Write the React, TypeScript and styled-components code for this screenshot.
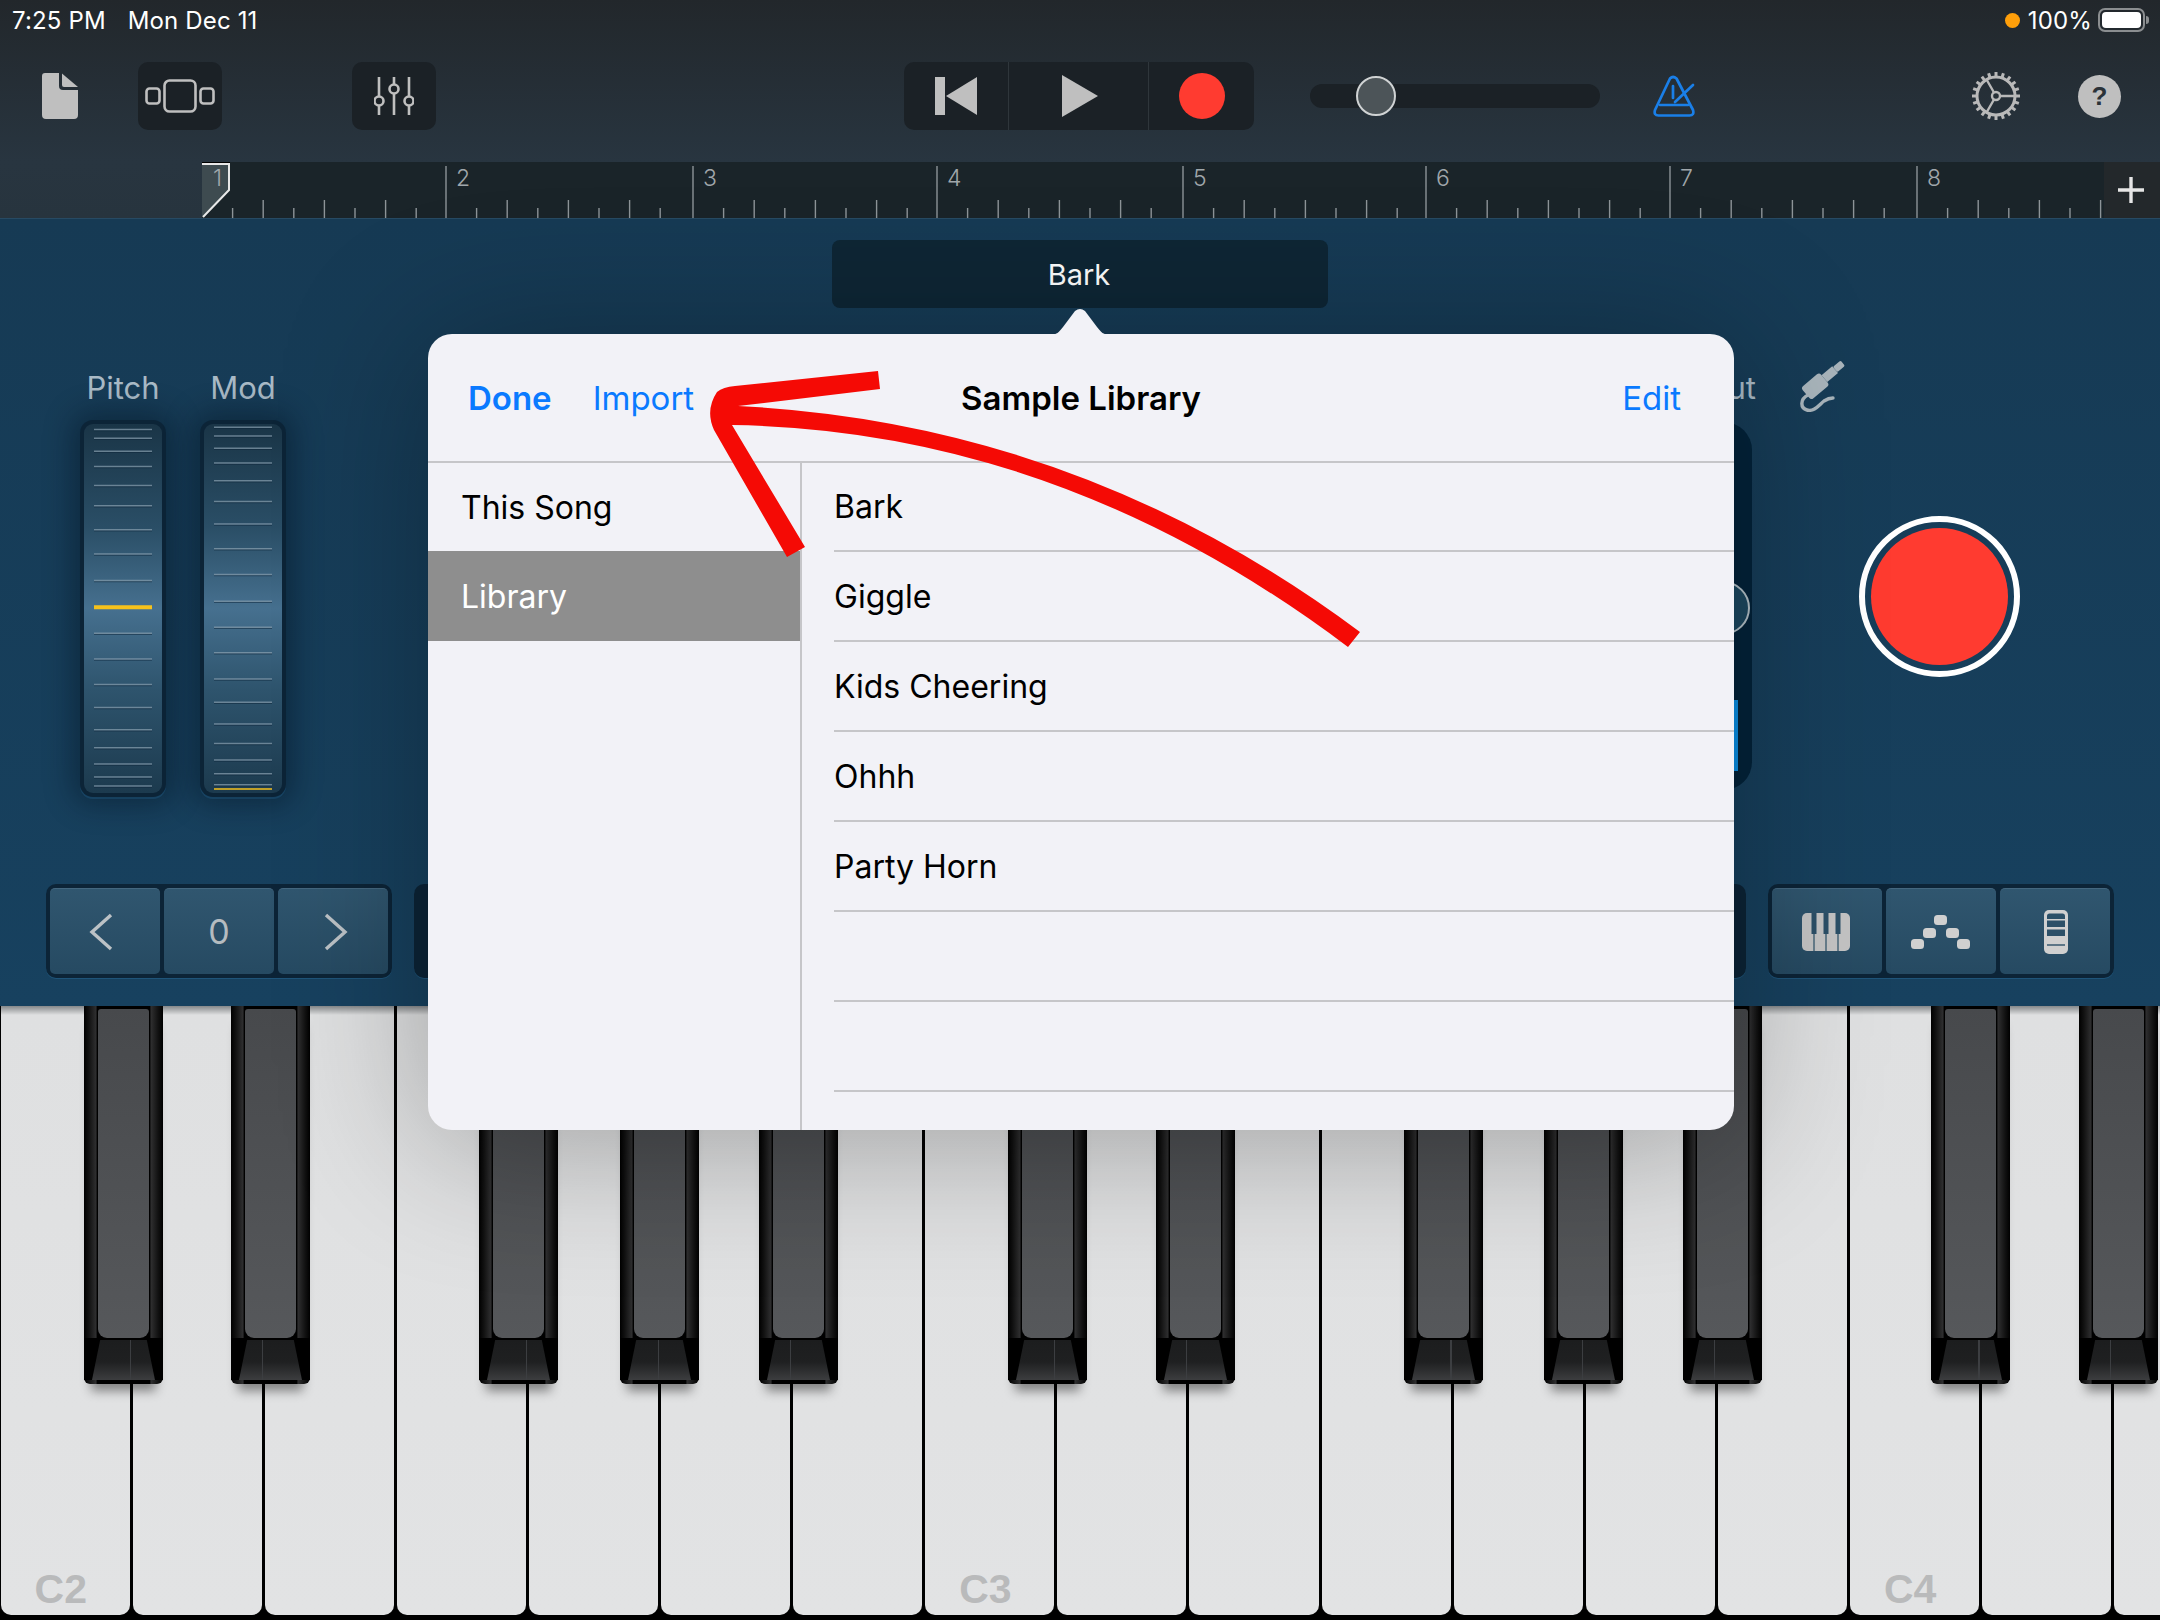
import React from "react";
import styled, { createGlobalStyle } from "styled-components";

const Global = createGlobalStyle`
  html, body { margin: 0; padding: 0; background: #000; }
  * { box-sizing: border-box; }
  body { font-family: Inter, "Noto Sans", sans-serif; }
`;

const Page = styled.div`
  position: relative;
  width: 2160px;
  height: 1620px;
  overflow: hidden;
  display: flex;
  flex-direction: column;
`;

const Top = styled.header`
  height: 162px;
  flex: none;
  background: linear-gradient(180deg, #22272b 0%, #283540 100%);
  color: #fff;
`;

const StatusBar = styled.div`
  height: 40px;
  padding: 0 15px 0 12px;
  display: flex;
  align-items: center;
  font-size: 24px;
  letter-spacing: 0.15px;
  font-weight: 400;
`;

const StatusTime = styled.span`
  margin-right: 22px;
`;

const StatusRight = styled.div`
  margin-left: auto;
  display: flex;
  align-items: center;
`;

const OrangeDot = styled.span`
  width: 15px;
  height: 15px;
  border-radius: 50%;
  background: #ff9f0a;
  margin-right: 8px;
`;

const Battery = styled.span`
  position: relative;
  width: 47px;
  height: 24px;
  margin-left: 6px;
  border: 2px solid #8b8e90;
  border-radius: 7px;
  padding: 2px;
  display: flex;
  &::before {
    content: "";
    flex: 1;
    background: #fff;
    border-radius: 4px;
  }
  &::after {
    content: "";
    position: absolute;
    right: -6px;
    top: 6px;
    width: 3px;
    height: 8px;
    border-radius: 0 3px 3px 0;
    background: #8b8e90;
  }
`;

const Toolbar = styled.div`
  height: 68px;
  margin-top: 22px;
  display: flex;
  align-items: center;
`;

const Slot = styled.div<{ $at: number; $w: number }>`
  flex: none;
  width: ${(p) => p.$w}px;
  margin-left: ${(p) => p.$at}px;
  display: flex;
  align-items: center;
  justify-content: center;
`;

const ToolButton = styled.div<{ $at: number }>`
  flex: none;
  width: 84px;
  height: 68px;
  margin-left: ${(p) => p.$at}px;
  border-radius: 10px;
  background: #1b2126;
  display: flex;
  align-items: center;
  justify-content: center;
`;

const Transport = styled.div`
  flex: none;
  width: 350px;
  height: 68px;
  margin-left: 468px;
  border-radius: 10px;
  background: #1b2126;
  display: flex;
`;

const TransportCell = styled.div<{ $w: number; $pad?: number }>`
  width: ${(p) => p.$w}px;
  border-right: 1px solid #2f363b;
  padding-left: ${(p) => p.$pad ?? 0}px;
  display: flex;
  align-items: center;
  justify-content: center;
  &:last-child {
    border-right: 0;
  }
`;

const RecordDot = styled.div`
  width: 46px;
  height: 46px;
  border-radius: 50%;
  background: #ff3b30;
`;

const VolumeTrack = styled.div`
  flex: none;
  width: 290px;
  height: 24px;
  margin-left: 56px;
  border-radius: 12px;
  background: #1b2126;
  display: flex;
  align-items: center;
  padding-left: 46px;
`;

const VolumeThumb = styled.div`
  width: 40px;
  height: 40px;
  border-radius: 50%;
  background: #4c5458;
  border: 2px solid #d0d3d4;
`;

const HelpButton = styled.div`
  flex: none;
  width: 43px;
  height: 43px;
  margin-left: 57px;
  border-radius: 50%;
  background: #bfbfbf;
  color: #2a3238;
  font-family: "Liberation Sans", sans-serif;
  font-weight: 700;
  font-size: 26px;
  display: flex;
  align-items: center;
  justify-content: center;
`;

const RulerRow = styled.div`
  height: 57px;
  flex: none;
  display: flex;
  background: linear-gradient(180deg, #283540 0%, #27343e 100%);
  border-bottom: 1px solid #274a63;
`;

const RulerGutter = styled.div`
  width: 202px;
  flex: none;
`;

const RulerTrack = styled.svg`
  width: 1902px;
  height: 56px;
  flex: none;
  display: block;
  background: #1a2429;
`;

const RulerNumber = styled.text`
  font-family: Inter, sans-serif;
  font-size: 23px;
  font-weight: 300;
  fill: #a0a7ab;
`;

const AddBar = styled.div`
  width: 56px;
  flex: none;
  background: #23282b;
  display: flex;
  align-items: center;
  justify-content: center;
  padding: 0 2px 0 0;
`;

const Panel = styled.section`
  height: 787px;
  flex: none;
  display: flex;
  flex-direction: column;
  padding-top: 21px;
  background: linear-gradient(180deg, #163a54 0%, #17415f 100%);
`;

const TitleBar = styled.div`
  align-self: center;
  width: 496px;
  height: 68px;
  flex: none;
  border-radius: 8px;
  background: #0e2635;
  color: #fff;
  font-size: 29px;
  padding-right: 2px;
  display: flex;
  align-items: center;
  justify-content: center;
`;

const MainRow = styled.div`
  display: flex;
  align-items: flex-start;
  margin-top: 50px;
  padding-left: 80px;
`;

const WheelColumn = styled.div<{ $gap: number }>`
  width: 86px;
  flex: none;
  margin-right: ${(p) => p.$gap}px;
  padding-top: 14px;
  display: flex;
  flex-direction: column;
  align-items: center;
`;

const ControlLabel = styled.div`
  height: 48px;
  font-size: 31px;
  line-height: 32px;
  color: #a9bac6;
  white-space: nowrap;
`;

const Wheel = styled.div`
  width: 86px;
  height: 377px;
  padding: 4px;
  border-radius: 13px;
  background: #0c2437;
  box-shadow: 0 0 28px 8px rgba(3, 16, 28, 0.4), 0 2px 0 #1f5479;
`;

const WheelFace = styled.svg`
  width: 78px;
  height: 369px;
  display: block;
  border-radius: 9px;
  background: linear-gradient(
    180deg,
    #1a3547 0%,
    #2a4e66 28%,
    #46708f 50%,
    #2e546d 72%,
    #1c3a4e 100%
  );
`;

const DarkColumn = styled.div`
  width: 756px;
  flex: none;
  margin-left: 714px;
  padding-top: 14px;
  display: flex;
  flex-direction: column;
  align-items: flex-end;
`;

const DarkPanel = styled.div`
  width: 752px;
  height: 368px;
  margin-right: 4px;
  margin-top: 2px;
  padding: 159px 2px 0 0;
  border-radius: 28px;
  background: #03233a;
  display: flex;
  flex-direction: column;
  align-items: flex-end;
`;

const Knob = styled.div`
  width: 54px;
  height: 54px;
  border-radius: 50%;
  background: #1c4860;
  border: 2px solid #b4c2c9;
`;

const BlueBar = styled.div`
  width: 100px;
  height: 71px;
  margin: 65px 12px 0 0;
  background: #0a8fe4;
`;

const RightColumn = styled.div`
  flex: none;
  padding-left: 44px;
  display: flex;
  flex-direction: column;
  align-items: flex-start;
`;

const RecordRing = styled.div`
  width: 161px;
  height: 161px;
  margin: 104px 0 0 59px;
  border-radius: 50%;
  border: 6px solid #fff;
  padding: 6px;
  display: flex;
`;

const RecordFill = styled.div`
  flex: 1;
  border-radius: 50%;
  background: #ff3b30;
`;

const ControlRow = styled.div`
  margin-top: auto;
  margin-bottom: 28px;
  padding-left: 46px;
  display: flex;
  gap: 22px;
`;

const Group = styled.div<{ $w: number }>`
  width: ${(p) => p.$w}px;
  height: 94px;
  padding: 4px;
  border-radius: 10px;
  background: #0c2437;
  box-shadow: 0 1px 0 #1f5479;
  display: flex;
  gap: 4px;
`;

const GroupButton = styled.div<{ $inL?: number; $inR?: number }>`
  width: 110px;
  height: 86px;
  flex: none;
  border-radius: 5px;
  background: linear-gradient(180deg, #30566f 0%, #264a62 100%);
  border-top: 1px solid #44677f;
  color: #b5bcc0;
  font-size: 34px;
  padding: 0 ${(p) => p.$inR ?? 0}px 0 ${(p) => p.$inL ?? 0}px;
  display: flex;
  align-items: center;
  justify-content: center;
`;

const Keyboard = styled.section`
  position: relative;
  flex: 1;
  background: #000;
  display: flex;
  gap: 3px;
  margin-left: 0.6px;
  padding-bottom: 5px;
`;

const WhiteKey = styled.div`
  width: 129.1px;
  flex: none;
  border-radius: 0 0 10px 10px;
  background: linear-gradient(180deg, #85888a 0, #dfe0e1 9px, #e2e3e4 100%);
  padding: 0 0 5px 34px;
  display: flex;
  align-items: flex-end;
  color: #b9babb;
  font-family: "Liberation Sans", sans-serif;
  font-weight: 700;
  font-size: 41px;
  line-height: 41px;
`;

const BlackKey = styled.div<{ $x: number }>`
  position: absolute;
  top: 0;
  left: ${(p) => p.$x - 0.6}px;
  width: 79px;
  height: 378px;
  border-radius: 0 0 6px 6px;
  background: linear-gradient(90deg, #000 0, #111 6%, #2e2e2f 15%, #000 17%, #000 83%, #2e2e2f 85%, #111 94%, #000 100%);
  box-shadow: 0 14px 10px -7px rgba(0, 0, 0, 0.42);
  &::before {
    content: "";
    position: absolute;
    top: 3px;
    left: 14px;
    width: 51px;
    height: 329px;
    border-radius: 3px 3px 9px 9px;
    background: linear-gradient(180deg, #47494c 0%, #56585b 100%);
  }
  &::after {
    content: "";
    position: absolute;
    left: 0;
    right: 0;
    top: 332px;
    bottom: 4px;
    background: #000;
    z-index: 0;
  }
`;

const KeyLip = styled.div<{ $split: number }>`
  position: absolute;
  top: 334px;
  left: 8px;
  width: 63px;
  height: 40px;
  z-index: 1;
  clip-path: polygon(13% 0, 87% 0, 100% 100%, 0 100%);
  background:
    linear-gradient(90deg, transparent ${(p) => p.$split - 9}px, #3c3e41 ${(p) => p.$split - 9}px, #3c3e41 ${(p) => p.$split - 7.5}px, transparent ${(p) => p.$split - 7.5}px),
    linear-gradient(180deg, #1c1d1e 0%, #1f2021 55%, #3c3d3f 100%);
`;

const Popover = styled.aside`
  position: absolute;
  left: 428px;
  top: 334px;
  width: 1306px;
  height: 796px;
  border-radius: 24px;
  background: #f2f2f7;
  box-shadow: 0 10px 150px rgba(0, 0, 0, 0.3);
  display: flex;
  flex-direction: column;
  color: #000;
  font-size: 32px;
  &::before {
    content: "";
    position: absolute;
    top: -26px;
    left: 621px;
    width: 62px;
    height: 27px;
    background: #f2f2f7;
    clip-path: path("M0 27 C8 27 10 24 14 19 L26 3 Q31 -1 36 3 L48 19 C52 24 54 27 62 27 Z");
  }
`;

const PopHeader = styled.div`
  height: 129px;
  flex: none;
  padding: 0 53px 0 40px;
  border-bottom: 2px solid #c6c6c9;
  display: grid;
  grid-template-columns: 1fr auto 1fr;
  align-items: center;
  font-size: 33px;
`;

const HeaderLeft = styled.div`
  display: flex;
  gap: 41px;
`;

const Action = styled.span<{ $strong?: boolean }>`
  color: #0a7aff;
  font-weight: ${(p) => (p.$strong ? 600 : 400)};
`;

const HeaderRight = styled.div`
  display: flex;
  justify-content: flex-end;
`;

const PopTitle = styled.div`
  font-weight: 600;
  margin-left: 13px;
`;

const PopBody = styled.div`
  flex: 1;
  display: flex;
`;

const Sources = styled.div`
  width: 374px;
  flex: none;
  border-right: 2px solid #c6c6c9;
`;

const SourceRow = styled.div<{ $active?: boolean }>`
  height: ${(p) => (p.$active ? 90 : 88)}px;
  padding-left: 33px;
  display: flex;
  align-items: center;
  background: ${(p) => (p.$active ? "#8e8e8e" : "transparent")};
  color: ${(p) => (p.$active ? "#fff" : "#000")};
`;

const Samples = styled.div`
  flex: 1;
  padding-left: 32px;
`;

const SampleRow = styled.div`
  height: 90px;
  border-bottom: 2px solid #c6c6c9;
  display: flex;
  align-items: center;
  &:first-child {
    height: 89px;
  }
`;

const Annotation = styled.svg`
  position: absolute;
  left: 0;
  top: 0;
  width: 2160px;
  height: 1620px;
  pointer-events: none;
`;

const barX = [0, 244, 491, 735, 981, 1224, 1468, 1715];

const RulerMarks = () => (
  <RulerTrack viewBox="0 0 1902 56">
    {barX.map((x, i) => (
      <g key={i}>
        {i > 0 && <line x1={x} x2={x} y1="4" y2="56" stroke="#8d9498" strokeWidth="1.4" />}
        {Array.from({ length: 7 }).map((_, t) => {
          const tx = x + (t + 1) * 30.6;
          if (tx > 1900) return null;
          return (
            <line
              key={t}
              x1={tx}
              x2={tx}
              y1={t % 2 === 0 ? 46 : 38}
              y2="56"
              stroke="#8d9498"
              strokeWidth="1.4"
            />
          );
        })}
        {i > 0 && (
          <RulerNumber x={x + 10} y="24">
            {i + 1}
          </RulerNumber>
        )}
      </g>
    ))}
    <path d="M0 0H28V2H0Z" fill="#000" />
    <path d="M0 2H27V28L1 55H0Z" fill="#3e4b50" />
    <path d="M0 2H27V28L1 55" fill="none" stroke="#e8e8e8" strokeWidth="2" />
    <RulerNumber x="11" y="24">1</RulerNumber>
  </RulerTrack>
);

const toWheel = (v: number) => (v - 185) / 2.306 - 4;

const Ticks = ({ marks, yellow, thin }: { marks: number[]; yellow: number; thin?: boolean }) => (
  <WheelFace viewBox="0 0 78 369">
    {marks.map((m) => (
      <g key={m}>
        <line x1="10" x2="68" y1={toWheel(m) + 1} y2={toWheel(m) + 1} stroke="#0c2437" strokeOpacity="0.5" strokeWidth="1.5" />
        <line x1="10" x2="68" y1={toWheel(m)} y2={toWheel(m)} stroke="#8aa1b1" strokeOpacity="0.7" strokeWidth="1.5" />
      </g>
    ))}
    <line x1="10" x2="68" y1={toWheel(yellow)} y2={toWheel(yellow)} stroke="#f6c21c" strokeWidth={thin ? 1.5 : 4} />
  </WheelFace>
);

const FileIcon = () => (
  <svg width="36" height="46" viewBox="0 0 36 46">
    <path d="M3 0H17V13a4 4 0 0 0 4 4H36V42a4 4 0 0 1-4 4H4a4 4 0 0 1-4-4V3a3 3 0 0 1 3-3Z" fill="#bfbfbf" />
    <path d="M20 0.5L36 14H22a2 2 0 0 1-2-2Z" fill="#bfbfbf" />
  </svg>
);

const TracksIcon = () => (
  <svg width="70" height="34" viewBox="0 0 70 34" fill="none" stroke="#bfbfbf" strokeWidth="2.6">
    <rect x="1.5" y="9.5" width="13" height="15" rx="3" />
    <rect x="19.5" y="1.5" width="31" height="31" rx="5" />
    <rect x="55.5" y="9.5" width="13" height="15" rx="3" />
  </svg>
);

const MixerIcon = () => (
  <svg width="40" height="38" viewBox="0 0 40 38" fill="none" stroke="#bfbfbf" strokeWidth="2.6">
    <path d="M5 0V19M5 29V38M20 0V7M20 17V38M35 0V19M35 29V38" />
    <circle cx="5" cy="24" r="4.5" />
    <circle cx="20" cy="12" r="4.5" />
    <circle cx="35" cy="24" r="4.5" />
  </svg>
);

const SkipIcon = () => (
  <svg width="42" height="38" viewBox="0 0 42 38" fill="#bfbfbf">
    <rect x="0" y="0" width="10" height="38" />
    <path d="M42 0V38L11 19Z" />
  </svg>
);

const PlayIcon = () => (
  <svg width="36" height="42" viewBox="0 0 36 42" fill="#bfbfbf">
    <path d="M0 0L36 21L0 42Z" />
  </svg>
);

const MetronomeIcon = () => (
  <svg width="42" height="42" viewBox="0 0 42 42" fill="none" stroke="#1a7fe8" strokeWidth="2.7" strokeLinejoin="round" strokeLinecap="round">
    <path d="M17 3.5Q20 0.5 23.5 3.5L40 35Q41.5 40.5 36.5 40.5H5.5Q0.5 40.5 2 35Z" />
    <path d="M7 30H35" />
    <path d="M22 27L40 10" />
    <path d="M20 11V23" />
  </svg>
);

const GearIcon = () => (
  <svg width="50" height="50" viewBox="-25 -25 50 50" fill="none" stroke="#b9b9b9">
    <circle r="19" strokeWidth="3" />
    {Array.from({ length: 20 }).map((_, i) => (
      <line key={i} x1="0" x2="0" y1="-19" y2="-24" strokeWidth="3" transform={`rotate(${i * 18})`} />
    ))}
    <circle r="4" strokeWidth="2.4" />
    <path d="M4 0H19M-2 -3.5L-9.5 -16.5M-2 3.5L-9.5 16.5" strokeWidth="2.4" />
  </svg>
);

const JackIcon = () => (
  <svg width="46" height="54" viewBox="0 0 46 54">
    <g transform="translate(6 36) rotate(-40)" fill="#a9b5bc">
      <rect x="0" y="-8" width="24" height="16" rx="3" />
      <rect x="24" y="-4.5" width="14" height="9" />
      <rect x="38" y="-3.5" width="10" height="7" rx="1.5" />
    </g>
    <path d="M8 37C0 41 0 50 7 52C14 54 19 47 24 43C27 41 31 40 33 40" fill="none" stroke="#a9b5bc" strokeWidth="3.4" strokeLinecap="round" />
  </svg>
);

const ChevronIcon = ({ right }: { right?: boolean }) => (
  <svg width="24" height="38" viewBox="0 0 24 38" fill="none" stroke="#bcc2c6" strokeWidth="3.4">
    <path d={right ? "M2 2L21 19L2 36" : "M22 2L3 19L22 36"} />
  </svg>
);

const PianoIcon = () => (
  <svg width="48" height="38" viewBox="0 0 48 38">
    <rect width="48" height="38" rx="5" fill="#c4c4c4" />
    <path d="M9.5 0H14.5V21H9.5ZM21.5 0H26.5V21H21.5ZM33.5 0H38.5V21H33.5Z" fill="#2c5068" />
    <path d="M12 21V38M24 21V38M36 21V38" stroke="#2c5068" strokeWidth="1.2" />
  </svg>
);

const ArpIcon = () => (
  <svg width="59" height="34" viewBox="0 0 59 34" fill="#d0d0d0">
    <rect x="0" y="24" width="13" height="10" rx="3.5" />
    <rect x="12" y="13" width="13" height="10" rx="3.5" />
    <rect x="23" y="0" width="13" height="10" rx="3.5" />
    <rect x="35" y="13" width="13" height="10" rx="3.5" />
    <rect x="46" y="24" width="13" height="10" rx="3.5" />
  </svg>
);

const StripIcon = () => (
  <svg width="24" height="44" viewBox="0 0 24 44">
    <rect x="0" y="0" width="24" height="44" rx="5" fill="#d0d0d0" />
    <path d="M3 9V6a2.5 2.5 0 0 1 2.5-2.5H18.5A2.5 2.5 0 0 1 21 6V9ZM3 10.5H21V17H3ZM3 19.5H21V26H3Z" fill="#2c5068" />
    <path d="M3 35H21" stroke="#2c5068" strokeWidth="1.4" />
  </svg>
);

const whiteKeys = Array.from({ length: 17 }).map((_, i) =>
  i === 0 ? "C2" : i === 7 ? "C3" : i === 14 ? "C4" : ""
);

const blackKeys = [
  [84, 131],
  [231, 263],
  [479, 527],
  [620, 659],
  [759, 791],
  [1008, 1055],
  [1156, 1187],
  [1404, 1451],
  [1544, 1583],
  [1683, 1715],
  [1931, 1979],
  [2079, 2111],
];

const pitchMarks = [207, 227, 257, 292, 336, 383, 438, 494, 555, 677, 736, 795, 848, 899, 941, 978, 1008, 1029];
const modMarks = [202, 222, 250, 284, 325, 373, 425, 482, 541, 603, 663, 722, 782, 836, 886, 931, 969, 1001, 1026];

export default function App() {
  return (
    <Page>
      <Global />
      <Top>
        <StatusBar>
          <StatusTime>7:25 PM</StatusTime>
          <span>Mon Dec 11</span>
          <StatusRight>
            <OrangeDot />
            <span>100%</span>
            <Battery />
          </StatusRight>
        </StatusBar>
        <Toolbar>
          <Slot $at={42} $w={36}>
            <FileIcon />
          </Slot>
          <ToolButton $at={60}>
            <TracksIcon />
          </ToolButton>
          <ToolButton $at={130}>
            <MixerIcon />
          </ToolButton>
          <Transport>
            <TransportCell $w={105}>
              <SkipIcon />
            </TransportCell>
            <TransportCell $w={140} $pad={2}>
              <PlayIcon />
            </TransportCell>
            <TransportCell $w={105}>
              <RecordDot />
            </TransportCell>
          </Transport>
          <VolumeTrack>
            <VolumeThumb />
          </VolumeTrack>
          <Slot $at={53} $w={42}>
            <MetronomeIcon />
          </Slot>
          <Slot $at={276} $w={50}>
            <GearIcon />
          </Slot>
          <HelpButton>?</HelpButton>
        </Toolbar>
      </Top>
      <RulerRow>
        <RulerGutter />
        <RulerMarks />
        <AddBar>
          <svg width="28" height="28" viewBox="0 0 28 28" stroke="#e6e6e6" strokeWidth="3.4">
            <path d="M14 1V27M1 14H27" />
          </svg>
        </AddBar>
      </RulerRow>
      <Panel>
        <TitleBar>Bark</TitleBar>
        <MainRow>
          <WheelColumn $gap={34}>
            <ControlLabel>Pitch</ControlLabel>
            <Wheel>
              <Ticks marks={pitchMarks} yellow={617} />
            </Wheel>
          </WheelColumn>
          <WheelColumn $gap={0}>
            <ControlLabel>Mod</ControlLabel>
            <Wheel>
              <Ticks marks={modMarks} yellow={1036} thin />
            </Wheel>
          </WheelColumn>
          <DarkColumn>
            <ControlLabel>Input</ControlLabel>
            <DarkPanel>
              <Knob />
              <BlueBar />
            </DarkPanel>
          </DarkColumn>
          <RightColumn>
            <JackIcon />
            <RecordRing>
              <RecordFill />
            </RecordRing>
          </RightColumn>
        </MainRow>
        <ControlRow>
          <Group $w={346}>
            <GroupButton $inR={8}>
              <ChevronIcon />
            </GroupButton>
            <GroupButton>0</GroupButton>
            <GroupButton $inL={6}>
              <ChevronIcon right />
            </GroupButton>
          </Group>
          <Group $w={1332} />
          <Group $w={346}>
            <GroupButton $inR={3}>
              <PianoIcon />
            </GroupButton>
            <GroupButton $inR={2}>
              <ArpIcon />
            </GroupButton>
            <GroupButton $inL={2}>
              <StripIcon />
            </GroupButton>
          </Group>
        </ControlRow>
      </Panel>
      <Keyboard>
        {whiteKeys.map((label, i) => (
          <WhiteKey key={i}>{label}</WhiteKey>
        ))}
        {blackKeys.map(([x, split]) => (
          <BlackKey key={x} $x={x}>
            <KeyLip $split={split - x} />
          </BlackKey>
        ))}
      </Keyboard>
      <Popover>
        <PopHeader>
          <HeaderLeft>
            <Action $strong>Done</Action>
            <Action>Import</Action>
          </HeaderLeft>
          <PopTitle>Sample Library</PopTitle>
          <HeaderRight>
            <Action>Edit</Action>
          </HeaderRight>
        </PopHeader>
        <PopBody>
          <Sources>
            <SourceRow>This Song</SourceRow>
            <SourceRow $active>Library</SourceRow>
          </Sources>
          <Samples>
            {["Bark", "Giggle", "Kids Cheering", "Ohhh", "Party Horn", "", ""].map((s, i) => (
              <SampleRow key={i}>{s}</SampleRow>
            ))}
          </Samples>
        </PopBody>
      </Popover>
      <Annotation viewBox="0 0 2160 1620">
        <path
          d="M878 371L880 389L738 406Q1080 423 1360 632L1348 647Q1060 430 732 425L805 547L787 557L714 430Q705 410 717 392Q723 387 735 386Z"
          fill="#f50a05"
        />
      </Annotation>
    </Page>
  );
}
